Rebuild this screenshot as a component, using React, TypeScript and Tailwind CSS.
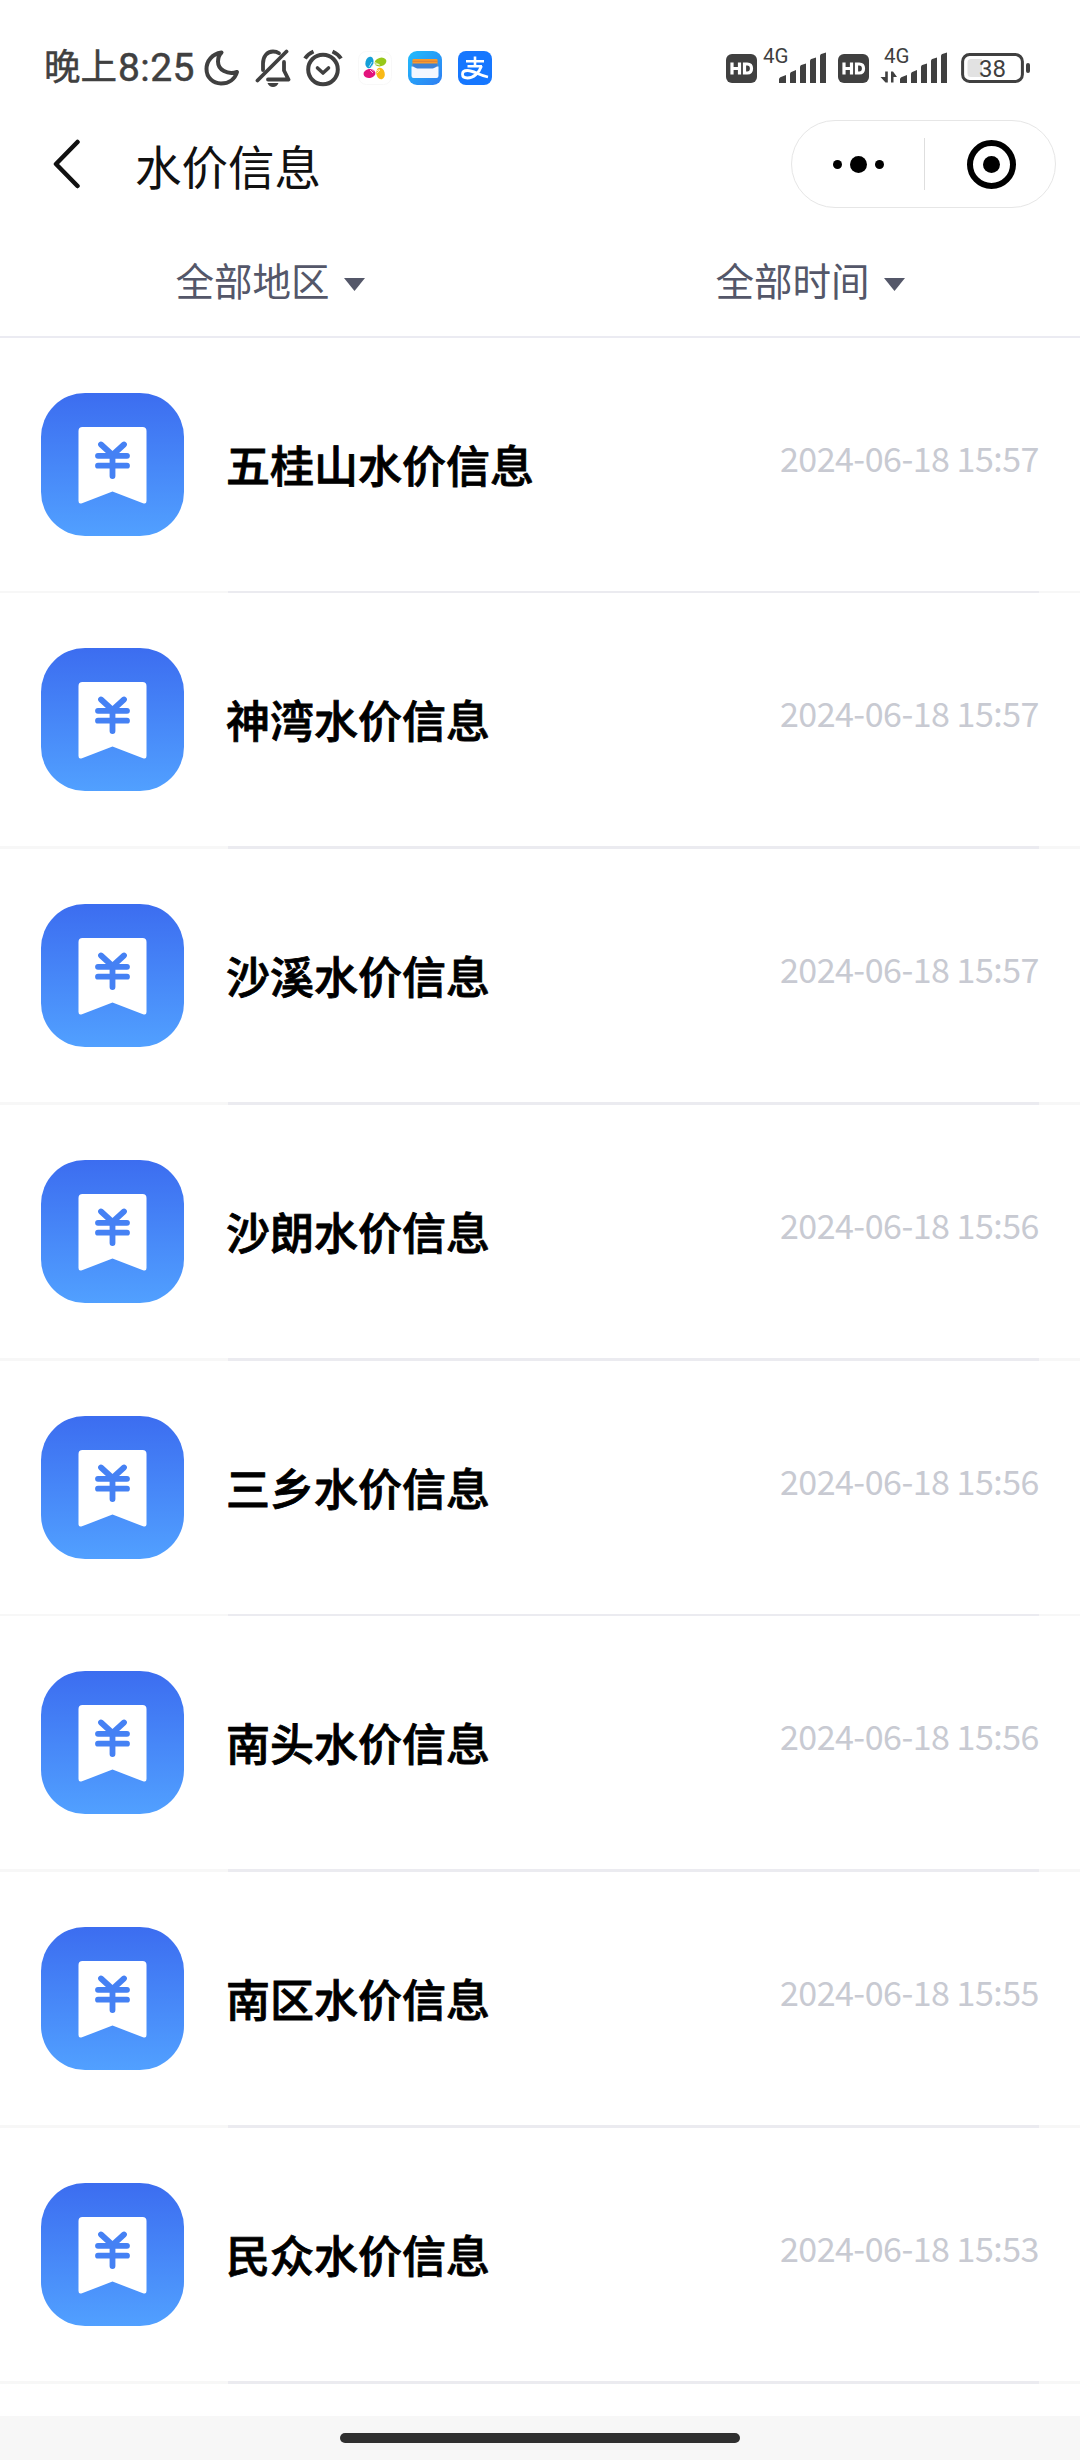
const rows = [
  { name: '五桂山水价信息', time: '2024-06-18 15:57' },
  { name: '神湾水价信息', time: '2024-06-18 15:57' },
  { name: '沙溪水价信息', time: '2024-06-18 15:57' },
  { name: '沙朗水价信息', time: '2024-06-18 15:56' },
  { name: '三乡水价信息', time: '2024-06-18 15:56' },
  { name: '南头水价信息', time: '2024-06-18 15:56' },
  { name: '南区水价信息', time: '2024-06-18 15:55' },
  { name: '民众水价信息', time: '2024-06-18 15:53' },
];

function MoonIcon() {
  return (
    <svg className="ml-[9px] h-9 w-9" viewBox="0 0 36 36" fill="none" stroke="#404040" strokeWidth="4" strokeLinejoin="round">
      <path d="M17.500 2.500C8 4 2.500 11 2.500 19c0 8.500 6.500 14.500 14.500 14.500 8 0 14-4.500 16-11.500-9.500 3-19-2-19-10.500 0-3.500 1-6.500 3.500-9z" />
    </svg>
  );
}

function MutedBellIcon() {
  return (
    <svg className="ml-[15px] h-[38px] w-9" viewBox="0 0 36 38" fill="none" stroke="#404040" strokeWidth="3.8" strokeLinecap="round" strokeLinejoin="round">
      <path d="M2.500 31.500 31.500 2.500" />
      <path d="M8 21v-6.500C8 7.500 12 2.500 18 2.500c2.500 0 4.500.7 6 1.800" />
      <path d="M29 13v8.500l4.500 9H13" />
      <path d="M12.500 34h11c-1 2.500-3 4-5.500 4s-4.500-1.500-5.500-4z" fill="#404040" stroke="none" />
    </svg>
  );
}

function AlarmIcon() {
  return (
    <svg className="ml-3 h-[38px] w-10" viewBox="0 0 40 38" fill="none" stroke="#404040" strokeWidth="4" strokeLinecap="round" strokeLinejoin="round">
      <circle cx="20" cy="20.500" r="14.800" />
      <path d="m14.500 19 5.500 5 5.500-5" strokeWidth="3.600" />
      <path d="M2 9.500C4 6.500 7 4 10.500 2.500M38 9.500C36 6.500 33 4 29.500 2.500" strokeLinecap="butt" />
    </svg>
  );
}

function PetalsIcon() {
  return (
    <svg className="ml-[15px] h-[34px] w-[34px]" viewBox="0 0 34 34">
      <rect x=".5" y=".5" width="33" height="33" rx="8" fill="#fff" stroke="#f8f8f8" />
      <ellipse cx="11.500" cy="11.500" rx="4" ry="5.800" fill="#149fd8" transform="rotate(14 11.500 11.500)" />
      <ellipse cx="22.500" cy="11" rx="6" ry="4.200" fill="#97c81b" transform="rotate(-16 22.500 11)" />
      <ellipse cx="11.500" cy="22.500" rx="6" ry="4.500" fill="#e3147d" transform="rotate(-8 11.500 22.500)" />
      <ellipse cx="22.500" cy="22.500" rx="4.200" ry="5.800" fill="#f9b916" transform="rotate(-14 22.500 22.500)" />
      <path d="m11 16 3-5M13 16.500l2-3M17 13l5 1M17 11.500l4 2M12 19l3 3M14 18.500l2 2M18.500 20l3-1.500M19 22l3-3" stroke="#fff" strokeWidth=".7" />
    </svg>
  );
}

function WalletIcon() {
  return (
    <svg className="ml-4 h-[34px] w-[34px]" viewBox="0 0 34 34">
      <defs>
        <linearGradient id="wallet" x1="0" y1="0" x2="1" y2="1">
          <stop offset="0" stopColor="#20bdfc" />
          <stop offset="1" stopColor="#2f7df2" />
        </linearGradient>
      </defs>
      <rect width="34" height="34" rx="9" fill="url(#wallet)" />
      <rect x="4.500" y="8" width="25" height="8" rx="1" fill="#fb9a2b" />
      <rect x="4.500" y="9.800" width="25" height="1" fill="#d9813a" />
      <rect x="4.500" y="12.500" width="25" height="7" fill="#3d82d6" />
      <path d="M3.500 15.500c2 0 2.500.5 3.500 1 1 .6 2 1 3.500 1h13c1.500 0 2.500-.4 3.500-1 1-.5 1.500-1 3.500-1V25a2 2 0 0 1-2 2h-23a2 2 0 0 1-2-2z" fill="#f3f7ff" />
    </svg>
  );
}

function AlipayIcon() {
  return (
    <svg className="ml-4 h-[34px] w-[34px]" viewBox="0 0 34 34" fill="none" stroke="#fff">
      <rect width="34" height="34" rx="8" fill="#1677ff" stroke="none" />
      <path d="M8 10.200h18M17 5.500v9M9.500 15.200h14.500" strokeWidth="2.600" />
      <path d="M23.500 15c-2.500 7-8 12-14 12-3.500 0-5-1.700-5-3.800C4.500 21 6.500 19.500 9.500 19.500c6 0 11 4.500 20.500 6.500" strokeWidth="2.800" />
    </svg>
  );
}

function HdBadge() {
  return (
    <svg className="h-[29px] w-[31px]" viewBox="0 0 31 29" fill="none" stroke="#fff" strokeWidth="3.200">
      <rect width="31" height="29" rx="6" fill="#404040" stroke="none" />
      <path d="M6 8.500v12M13.500 8.500v12M6 14.500h7.500M18.500 10h2.700c3 0 4.300 2 4.300 4.500S24.200 19 21.200 19h-2.700z" />
    </svg>
  );
}

function Signal({ data = false }: { data?: boolean }) {
  return (
    <svg className="h-11 w-[68px] overflow-visible" viewBox="0 -8 68 44" fill="#404040">
      <text x="0" y="15" fontFamily="Roboto, sans-serif" fontSize="20.500">4G</text>
      {data && <path d="M1.200 23.500h2.600v11H1.500L-3.500 29h4.700zM7 34.500v-11h2l4 5.500H9.500v5.500z" />}
      <path d="M16 35v-3.500q0-1.500 1.300-2.200L23 27v8zM27 35V26q0-1.500 1.300-2L33 22v13zM37 35V19q0-1.500 1.300-2L43 15.500V35zM47 35V13q0-1.500 1.300-2L53 9.500V35zM57 35V8q0-1.500 1.300-2L63 4.500V35z" />
    </svg>
  );
}

function Battery() {
  return (
    <svg className="h-[30px] w-[69px]" viewBox="0 0 69 30">
      <rect x="1.600" y="1.600" width="59.800" height="26.800" rx="7" fill="none" stroke="#404040" strokeWidth="3" />
      <path d="M10 6h11v18H10a3.500 3.500 0 0 1-3.500-3.500v-11A3.500 3.500 0 0 1 10 6z" fill="#e2e2e2" />
      <rect x="65" y="10" width="4" height="10" rx="2" fill="#404040" />
      <text x="31.500" y="23.500" textAnchor="middle" fontFamily="Roboto, sans-serif" fontSize="24" fill="#404040">38</text>
    </svg>
  );
}

function StatusBar() {
  return (
    <div className="flex h-[120px] items-center pt-4 pr-[50px] pl-[44px] text-[#404040]">
      <span className="pb-[5px] font-['Noto_Sans_CJK_SC',sans-serif] text-[36.500px] leading-none [-webkit-text-stroke:0.5px_#404040]">晚上</span>
      <span className="ml-px font-['Roboto',sans-serif] text-[39px] leading-none tracking-[0.4px] [-webkit-text-stroke:0.5px_#404040]">8:25</span>
      <MoonIcon />
      <MutedBellIcon />
      <AlarmIcon />
      <PetalsIcon />
      <WalletIcon />
      <AlipayIcon />
      <div className="ml-auto flex items-center">
        <HdBadge />
        <div className="ml-1.5 pb-3"><Signal /></div>
        <div className="ml-[7px]"><HdBadge /></div>
        <div className="ml-[15px] pb-3"><Signal data /></div>
        <div className="ml-[9px]"><Battery /></div>
      </div>
    </div>
  );
}

function NavBar() {
  return (
    <div className="flex h-[88px] items-center pr-6 pl-[52px]">
      <svg className="h-[50px] w-7" viewBox="0 0 28 50" fill="none" stroke="#111" strokeWidth="4.500" strokeLinecap="round" strokeLinejoin="round">
        <path d="M25.500 3 4 25l21.500 22" />
      </svg>
      <h1 className="ml-[55px] pt-[3px] text-[46.500px] leading-none text-[#111]">水价信息</h1>
      <div className="ml-auto flex h-[88px] w-[265px] items-center rounded-full border border-[#e6e6e6]">
        <div className="flex w-[132px] items-center justify-center gap-2">
          <span className="size-[9px] rounded-full bg-black" />
          <span className="size-[17px] rounded-full bg-black" />
          <span className="size-[9px] rounded-full bg-black" />
        </div>
        <div className="h-[52px] w-px bg-[#dedede]" />
        <div className="flex flex-1 justify-center pl-[3px]">
          <div className="flex size-[49px] items-center justify-center rounded-full border-[6px] border-black">
            <span className="size-[17px] rounded-full bg-black" />
          </div>
        </div>
      </div>
    </div>
  );
}

function Filter({ label }: { label: string }) {
  return (
    <div className="flex flex-1 items-center justify-center">
      <span>{label}</span>
      <svg className="mt-2 ml-[14px] h-[13px] w-[21px]" viewBox="0 0 21 13" fill="#545769">
        <path d="M0 0h21L10.500 13z" />
      </svg>
    </div>
  );
}

function PriceIcon() {
  return (
    <svg className="size-[143px]" viewBox="0 0 143 143">
      <defs>
        <linearGradient id="price" x1="0" y1="0" x2="0" y2="1">
          <stop offset="0" stopColor="#3c6df0" />
          <stop offset="1" stopColor="#51a0ff" />
        </linearGradient>
      </defs>
      <rect width="143" height="143" rx="44" fill="url(#price)" />
      <path d="M41.500 34h60a4 4 0 0 1 4 4v70q0 3.500-3.500 2.300L71.500 98.500 41 110.300q-3.500 1.200-3.500-2.300V38a4 4 0 0 1 4-4z" fill="#fff" />
      <path d="M60 51.500 71.500 62 83 51.500M57 62.800h29M57 72.700h29M71.500 62v21" fill="none" stroke="#4581f4" strokeWidth="5.800" strokeLinecap="round" />
    </svg>
  );
}

export default function App() {
  return (
    <div className="flex h-[2460px] w-[1080px] flex-col bg-white font-['Noto_Sans_CJK_SC',sans-serif]">
      <StatusBar />
      <NavBar />
      <div className="flex h-[129.500px] border-b-2 border-[#ebebf2] pt-[17px] text-[38.500px] text-[#545769]">
        <Filter label="全部地区" />
        <Filter label="全部时间" />
      </div>

      <ul className="flex-1">
        {rows.map((row) => (
          <li key={row.name} className="flex h-[255.750px] flex-col">
            <div className="flex flex-1 items-start pr-[41px] pl-[41px]">
              <div className="mt-[55px]">
                <PriceIcon />
              </div>
              <h2 className="mt-[94px] ml-[42px] flex-1 text-[44px] leading-[64px] font-medium text-black [-webkit-text-stroke:0.8px_black]">
                {row.name}
              </h2>
              <time className="mt-[98px] text-[34px] leading-[44px] tracking-[-0.5px] text-[#c8cad2]">{row.time}</time>
            </div>
            <div className="h-[2.600px] bg-[#f7f7f7] pr-[41px] pl-[228px]">
              <div className="h-full bg-[#ebebf0]" />
            </div>
          </li>
        ))}
      </ul>

      <div className="flex h-11 justify-center bg-[#f7f7f7] pt-[17px]">
        <div className="h-[10px] w-[400px] rounded-full bg-[#303030]" />
      </div>
    </div>
  );
}
